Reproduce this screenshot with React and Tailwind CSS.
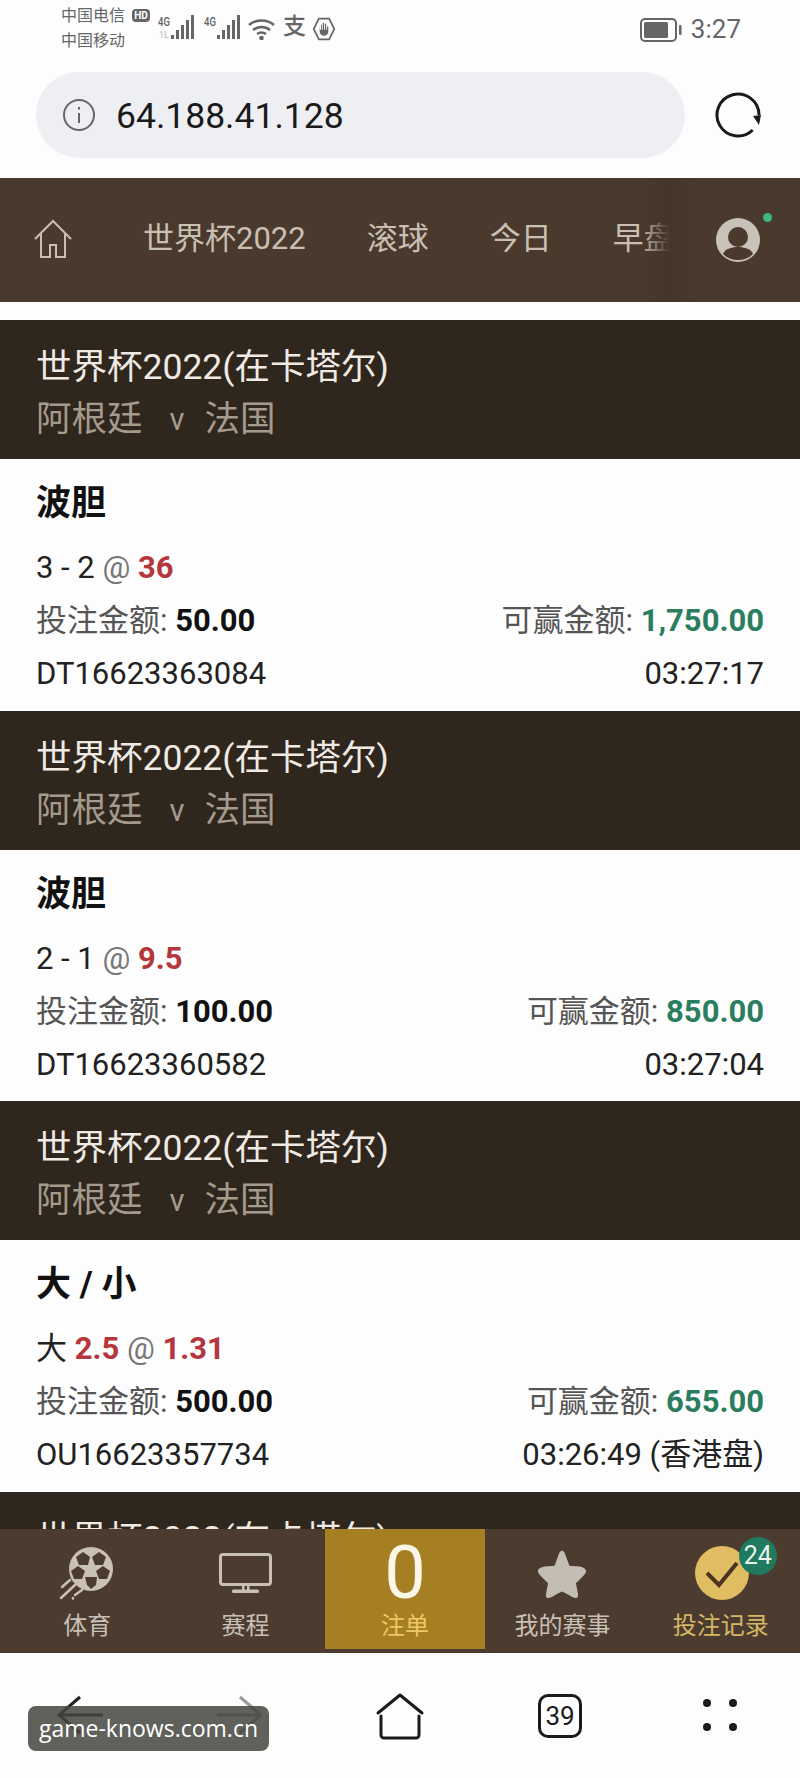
const SANS = "font-['Roboto','Noto_Sans_CJK_SC',sans-serif]";

const bets = [
  {
    market: "波胆",
    pick: "3 - 2",
    odds: "36",
    stake: "50.00",
    win: "1,750.00",
    ticket: "DT16623363084",
    time: "03:27:17",
  },
  {
    market: "波胆",
    pick: "2 - 1",
    odds: "9.5",
    stake: "100.00",
    win: "850.00",
    ticket: "DT16623360582",
    time: "03:27:04",
  },
  {
    market: "大 / 小",
    prefix: "大",
    line: "2.5",
    odds: "1.31",
    stake: "500.00",
    win: "655.00",
    ticket: "OU16623357734",
    time: "03:26:49 (香港盘)",
  },
];

const Signal = ({ lower }) => (
  <svg width="38" height="36" viewBox="0 0 38 36" fill="#666">
    <text x="0" y="18" fontSize="13" fontWeight="500" fontFamily="Roboto" fill="#666" textLength="12" lengthAdjust="spacingAndGlyphs">4G</text>
    {lower && <text x="1" y="30" fontSize="9" fontFamily="Roboto" fill="#bbb">1L</text>}
    <rect x="13" y="27" width="3" height="4" />
    <rect x="18" y="22" width="3" height="9" />
    <rect x="23" y="17" width="3" height="14" />
    <rect x="28" y="12" width="3" height="19" />
    <rect x="33" y="7" width="3" height="24" />
  </svg>
);

const Header = () => (
  <div className="h-[139px] shrink-0 bg-[#2f261e] pl-[36px] pt-[22px] text-[35.5px] leading-[51px]">
    <div className="text-[#efeae3]">世界杯2022(在卡塔尔)</div>
    <div className="mt-[1px] flex text-[#a59a8c]">
      <span>阿根廷</span>
      <span className="ml-[27px] text-[31px]">v</span>
      <span className="ml-[20px]">法国</span>
    </div>
  </div>
);

const Bet = ({ bet }) => (
  <div className="h-[251.7px] shrink-0 bg-[#fdfdfd] px-[36px] pt-[20px] text-[31px] leading-[53px]">
    <div className="mb-[12px] h-[50px] text-[35px] font-bold leading-[50px] text-[#111]">{bet.market}</div>
    <div className="text-[#222]">
      {bet.prefix && <span>{bet.prefix} </span>}
      {bet.line && <b className="font-bold text-[#b5363c]">{bet.line} </b>}
      {bet.pick && <span>{bet.pick} </span>}
      <span className="text-[#777]">@ </span>
      <b className="font-bold text-[#b5363c]">{bet.odds}</b>
    </div>
    <div className="flex justify-between text-[#555]">
      <span>
        投注金额: <b className="font-bold text-[#111]">{bet.stake}</b>
      </span>
      <span>
        可赢金额: <b className="font-bold text-[#2a7d5f]">{bet.win}</b>
      </span>
    </div>
    <div className="flex justify-between text-[#222]">
      <span>{bet.ticket}</span>
      <span>{bet.time}</span>
    </div>
  </div>
);

const Football = () => (
  <svg width="66" height="70" viewBox="0 0 66 70" className="ml-[8px] mt-[14px]">
    <circle cx="33" cy="26" r="22" fill="#c9c0b6" />
    <g fill="#4c3c2f">
      <polygon points="25,9 32,14 30,22 21,22 18,14" />
      <polygon points="41,9 48,14 45,22 37,22 34,14" />
      <polygon points="20,23 27,28 24,36 16,36 13,28" />
      <polygon points="45,23 52,28 49,36 41,36 38,28" />
      <polygon points="27,34 39,34 38,42 33,46 29,42" />
    </g>
    <g stroke="#c9c0b6" strokeWidth="2.5" strokeLinecap="round" fill="none">
      <path d="M12 37 L4 44" />
      <path d="M17 42 L3 55" />
      <path d="M24 47 L17 52" />
      <path d="M15 55 L15 55.500" />
    </g>
  </svg>
);

const Monitor = () => (
  <svg width="53" height="40" viewBox="0 0 53 40" fill="none" className="mt-[24px]">
    <rect x="1.500" y="1.500" width="50" height="30" rx="2.500" stroke="#c9c0b6" strokeWidth="3" />
    <rect x="23" y="32" width="2.500" height="5" fill="#c9c0b6" />
    <rect x="28" y="32" width="2.500" height="5" fill="#c9c0b6" />
    <rect x="13" y="36.500" width="27" height="3.500" rx="1.500" fill="#c9c0b6" />
  </svg>
);

const Star = () => (
  <svg width="50" height="50" viewBox="0 0 54 54" className="mt-[20px]">
    <path
      d="M27 2c2 0 3 2 5 8l3 8 11 1c5 1 7 3 7 5s-2 4-6 8l-5 5 2 10c1 4 0 6-2 6s-4-1-9-4l-6-3-6 3c-5 3-7 4-9 4s-3-2-2-6l2-10-5-5c-4-4-6-6-6-8s2-4 7-5l11-1 3-8c2-6 3-8 5-8z"
      fill="#c4bdb3"
    />
  </svg>
);

const Check = () => (
  <div className="relative ml-[2px] mt-[17px] h-[54px] w-[54px]">
    <svg width="54" height="54" viewBox="0 0 54 54">
      <circle cx="27" cy="27" r="27" fill="#e0bc62" />
      <path d="M12 27 L24 39 L42 17" stroke="#4d3220" strokeWidth="4" fill="none" />
    </svg>
    <div className="absolute left-[44px] top-[-9px] flex h-[38px] w-[38px] items-center justify-center rounded-full bg-[#1f7a5f] text-[25px] text-[#e8f3ee]">
      24
    </div>
  </div>
);

const tabs = [
  { label: "体育", icon: <Football /> },
  { label: "赛程", icon: <Monitor /> },
  { label: "注单", gold: true },
  { label: "我的赛事", icon: <Star /> },
  { label: "投注记录", icon: <Check />, done: true },
];

const App = () => {
  return (
    <div className={`flex h-[1778px] w-[800px] flex-col overflow-hidden bg-[#fdfdfd] ${SANS}`}>
      {/* barra de estado */}
      <div className="flex h-[62px] shrink-0 items-start pl-[61px] pr-[59px] pt-[3px] text-[#666]">
        <div className="w-[66px] text-[16px] leading-[25px]">
          <div>中国电信</div>
          <div>中国移动</div>
        </div>
        <div className="ml-[5px] mt-[6px] flex h-[13px] w-[18px] items-center justify-center rounded-[4px] bg-[#666] text-[10px] font-bold leading-none text-white">
          HD
        </div>
        <div className="ml-[8px] mt-[5px] flex">
          <Signal lower />
          <div className="ml-[8px] w-[36px]">
            <Signal />
          </div>
        </div>
        <svg width="27" height="22" viewBox="0 0 27 22" fill="none" stroke="#666" strokeWidth="2.600" className="ml-[8px] mt-[15px]">
          <path d="M1 7c7-6 18-6 25 0" />
          <path d="M5 12c5-4 12-4 17 0" />
          <path d="M9 16c3-2 6-2 9 0" />
          <circle cx="13.500" cy="20" r="1" fill="#666" />
        </svg>
        <span className="ml-[8px] mt-[13px] w-[22px] text-[23px] font-medium leading-[22px]">支</span>
        <svg width="24" height="24" viewBox="0 0 26 28" className="ml-[7px] mt-[14px]">
          <path d="M7 2h12l6 12-6 12H7L1 14z" fill="none" stroke="#666" strokeWidth="2" />
          <path d="M8 11v6c0 3 2 5 5 5s5-2 5-5v-6h-1.500v4h-1V8h-1.500v7h-1V7h-1.500v8h-1V9H9.500v6h-1z" fill="#666" />
        </svg>
        <div className="ml-auto flex items-center">
          <svg width="42" height="24" viewBox="0 0 42 24" fill="none" className="mt-[15px]">
            <rect x="1" y="1" width="35" height="22" rx="4" stroke="#666" strokeWidth="2" />
            <rect x="4" y="4" width="24" height="16" rx="1.500" fill="#666" />
            <rect x="39" y="7" width="2.500" height="10" rx="1" fill="#666" />
          </svg>
          <span className="ml-[9px] mt-[13px] text-[26px] leading-[24px]">3:27</span>
        </div>
      </div>

      {/* barra de direcciones */}
      <div className="flex h-[116px] shrink-0 items-start pl-[36px] pt-[10px]">
        <div className="flex h-[86px] w-[649px] items-center rounded-[43px] bg-[#eeeff3] pl-[27px]">
          <svg width="32" height="32" viewBox="0 0 32 32" fill="none" stroke="#666" strokeWidth="2">
            <circle cx="16" cy="16" r="15" />
            <path d="M16 14v10" />
            <path d="M16 8v2.500" />
          </svg>
          <span className="ml-[21px] mt-[3px] text-[35.500px] text-[#1a1a1a]">64.188.41.128</span>
        </div>
        <svg width="48" height="48" viewBox="0 0 48 48" fill="none" className="ml-[29px] mt-[19px]">
          <path d="M38.700 39A21 21 0 1 1 45 24" stroke="#1a1a1a" strokeWidth="3" />
          <path d="M39 25l8-1-2 10z" fill="#1a1a1a" />
        </svg>
      </div>

      {/* menú superior */}
      <div className="relative flex h-[124px] shrink-0 items-center bg-[#4a3a2d] text-[31px] text-[#c9bfb3]">
        <div className="flex w-[672px] items-center overflow-hidden pb-[2px] pl-[34px]">
          <svg width="38" height="40" viewBox="0 0 38 40" fill="none" stroke="#c9bfb3" strokeWidth="2" className="shrink-0">
            <path d="M1 20L19 2l18 18" />
            <path d="M7 15v23h9V26h6v12h9V15" />
          </svg>
          <span className="ml-[71px] shrink-0">世界杯2022</span>
          <span className="ml-[61px] shrink-0">滚球</span>
          <span className="ml-[61px] shrink-0">今日</span>
          <span className="ml-[61px] shrink-0">早盘</span>
        </div>
        <div className="absolute left-[640px] top-0 h-full w-[60px] bg-gradient-to-r from-[#4a3a2d00] via-[#44352a] to-[#4a3a2d00]" />
        <svg width="44" height="44" viewBox="0 0 44 44" className="ml-[44px]">
          <circle cx="22" cy="22" r="22" fill="#c9c2b8" />
          <circle cx="22" cy="19" r="10" fill="#4a3a2d" />
          <path d="M7 36c2-5 8-7 15-7s13 2 15 7c-4 4-9 6-15 6s-11-2-15-6z" fill="#4a3a2d" />
        </svg>
        <span className="absolute left-[763px] top-[35px] h-[9px] w-[9px] rounded-full bg-[#3bb883]" />
      </div>

      {/* lista de apuestas */}
      <div className="flex min-h-0 flex-1 flex-col overflow-hidden pt-[18px]">
        {bets.map((bet) => (
          <div key={bet.ticket} className="shrink-0">
            <Header />
            <Bet bet={bet} />
          </div>
        ))}
        <Header />
      </div>

      {/* navegación inferior */}
      <div className="grid h-[124px] shrink-0 grid-cols-5 bg-[#4c3c2f] pl-[8px]">
        {tabs.map((tab) => (
          <div
            key={tab.label}
            className={
              tab.gold
                ? "-mr-[2px] flex h-[120px] flex-col items-center bg-[#a67f22]"
                : "flex flex-col items-center"
            }
          >
            <div className="flex h-[83px] items-start justify-center">
              {tab.gold ? (
                <span className="mt-[7px] text-[74px] leading-none text-[#fbf6e8]">0</span>
              ) : (
                tab.icon
              )}
            </div>
            <span
              className={
                tab.gold
                  ? "text-[24px] leading-[28px] text-[#ecc964]"
                  : tab.done
                    ? "text-[24px] leading-[28px] text-[#d6b766]"
                    : "text-[24px] leading-[28px] text-[#c9c0b6]"
              }
            >
              {tab.label}
            </span>
          </div>
        ))}
      </div>

      {/* barra del navegador */}
      <div className="relative flex h-[125px] shrink-0 items-start bg-[#fdfdfd] pt-[38px]">
        <svg width="48" height="48" viewBox="0 0 48 48" fill="none" stroke="#222" strokeWidth="3" className="ml-[56px]">
          <path d="M24 6L3 24l21 18M3 24h44" />
        </svg>
        <svg width="48" height="48" viewBox="0 0 48 48" fill="none" stroke="#999" strokeWidth="3" className="ml-[112px]">
          <path d="M24 6l21 18-21 18M45 24H1" />
        </svg>
        <svg width="50" height="48" viewBox="0 0 50 48" fill="none" stroke="#1a1a1a" strokeWidth="3" strokeLinecap="round" strokeLinejoin="round" className="ml-[111px] mt-[1px]">
          <path d="M3 21L25 3l22 18" />
          <path d="M6 24v19a3 3 0 0 0 3 3h32a3 3 0 0 0 3-3V24" />
        </svg>
        <div className="ml-[113px] mt-[3px] flex h-[44px] w-[44px] items-center justify-center rounded-[10px] border-[3px] border-[#1a1a1a] text-[26px] text-[#1a1a1a]">
          39
        </div>
        <div className="ml-[121px] mt-[8px] grid grid-cols-2 gap-x-[18px] gap-y-[16px]">
          <span className="h-[8px] w-[8px] rounded-full bg-[#1a1a1a]" />
          <span className="h-[8px] w-[8px] rounded-full bg-[#1a1a1a]" />
          <span className="h-[8px] w-[8px] rounded-full bg-[#1a1a1a]" />
          <span className="h-[8px] w-[8px] rounded-full bg-[#1a1a1a]" />
        </div>
        <div className="absolute left-[28px] top-[53px] flex h-[45px] w-[241px] items-center justify-center rounded-[8px] bg-[#45453f]/85 font-['Open_Sans',sans-serif] text-[23px] text-white">
          game-knows.com.cn
        </div>
      </div>
    </div>
  );
};

export default App;
